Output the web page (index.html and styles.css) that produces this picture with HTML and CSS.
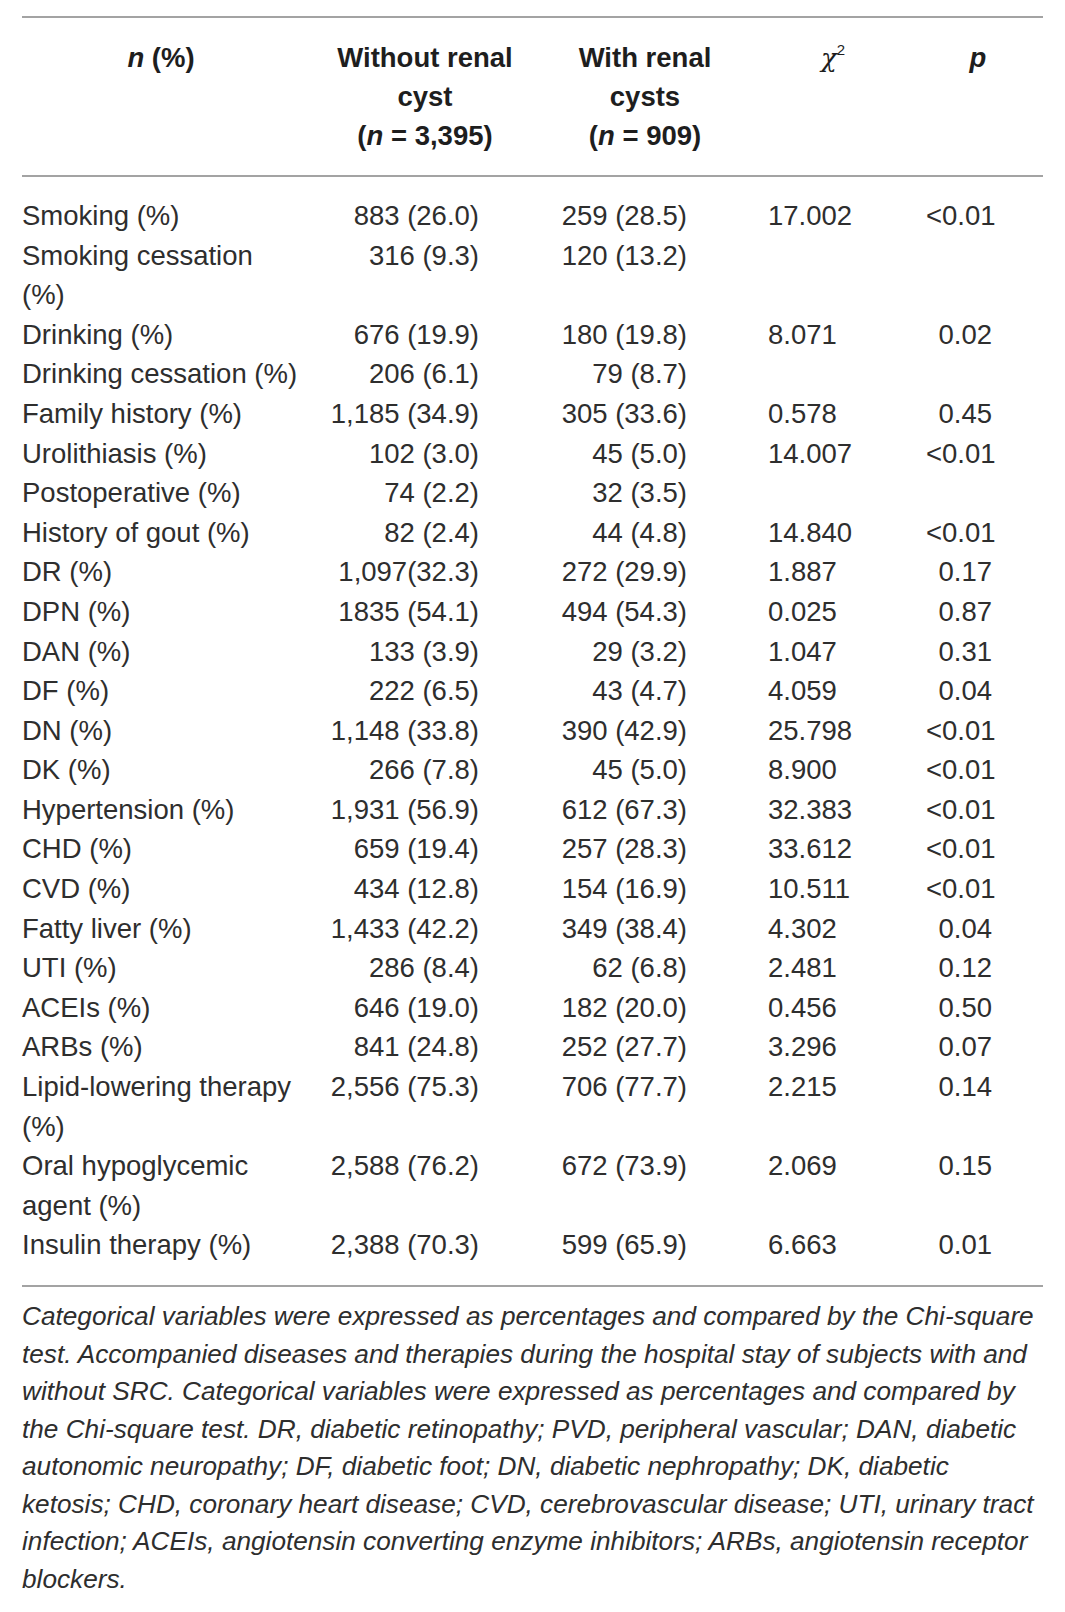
FILE: index.html
```html
<!DOCTYPE html>
<html>
<head>
<meta charset="utf-8">
<link rel="stylesheet" href="styles.css">
</head>
<body>
<div class="wrap">
  <div class="table">
    <div class="row head">
      <div class="c1 hc"><i>n</i> (%)</div>
      <div class="c2 hc">Without renal cyst<br>(<i>n</i> = 3,395)</div>
      <div class="c3 hc">With renal<br>cysts<br>(<i>n</i> = 909)</div>
      <div class="c4 hc chi"><i>χ</i><sup>2</sup></div>
      <div class="c5 hc"><i>p</i></div>
    </div>
    <div class="body">
      <div class="row"><div class="c1">Smoking (%)</div><div class="c2">883 (26.0)</div><div class="c3">259 (28.5)</div><div class="c4">17.002</div><div class="c5">&lt;0.01</div></div>
      <div class="row"><div class="c1">Smoking cessation (%)</div><div class="c2">316 (9.3)</div><div class="c3">120 (13.2)</div><div class="c4"></div><div class="c5"></div></div>
      <div class="row"><div class="c1">Drinking (%)</div><div class="c2">676 (19.9)</div><div class="c3">180 (19.8)</div><div class="c4">8.071</div><div class="c5">0.02</div></div>
      <div class="row"><div class="c1">Drinking cessation (%)</div><div class="c2">206 (6.1)</div><div class="c3">79 (8.7)</div><div class="c4"></div><div class="c5"></div></div>
      <div class="row"><div class="c1">Family history (%)</div><div class="c2">1,185 (34.9)</div><div class="c3">305 (33.6)</div><div class="c4">0.578</div><div class="c5">0.45</div></div>
      <div class="row"><div class="c1">Urolithiasis (%)</div><div class="c2">102 (3.0)</div><div class="c3">45 (5.0)</div><div class="c4">14.007</div><div class="c5">&lt;0.01</div></div>
      <div class="row"><div class="c1">Postoperative (%)</div><div class="c2">74 (2.2)</div><div class="c3">32 (3.5)</div><div class="c4"></div><div class="c5"></div></div>
      <div class="row"><div class="c1">History of gout (%)</div><div class="c2">82 (2.4)</div><div class="c3">44 (4.8)</div><div class="c4">14.840</div><div class="c5">&lt;0.01</div></div>
      <div class="row"><div class="c1">DR (%)</div><div class="c2">1,097(32.3)</div><div class="c3">272 (29.9)</div><div class="c4">1.887</div><div class="c5">0.17</div></div>
      <div class="row"><div class="c1">DPN (%)</div><div class="c2">1835 (54.1)</div><div class="c3">494 (54.3)</div><div class="c4">0.025</div><div class="c5">0.87</div></div>
      <div class="row"><div class="c1">DAN (%)</div><div class="c2">133 (3.9)</div><div class="c3">29 (3.2)</div><div class="c4">1.047</div><div class="c5">0.31</div></div>
      <div class="row"><div class="c1">DF (%)</div><div class="c2">222 (6.5)</div><div class="c3">43 (4.7)</div><div class="c4">4.059</div><div class="c5">0.04</div></div>
      <div class="row"><div class="c1">DN (%)</div><div class="c2">1,148 (33.8)</div><div class="c3">390 (42.9)</div><div class="c4">25.798</div><div class="c5">&lt;0.01</div></div>
      <div class="row"><div class="c1">DK (%)</div><div class="c2">266 (7.8)</div><div class="c3">45 (5.0)</div><div class="c4">8.900</div><div class="c5">&lt;0.01</div></div>
      <div class="row"><div class="c1">Hypertension (%)</div><div class="c2">1,931 (56.9)</div><div class="c3">612 (67.3)</div><div class="c4">32.383</div><div class="c5">&lt;0.01</div></div>
      <div class="row"><div class="c1">CHD (%)</div><div class="c2">659 (19.4)</div><div class="c3">257 (28.3)</div><div class="c4">33.612</div><div class="c5">&lt;0.01</div></div>
      <div class="row"><div class="c1">CVD (%)</div><div class="c2">434 (12.8)</div><div class="c3">154 (16.9)</div><div class="c4">10.511</div><div class="c5">&lt;0.01</div></div>
      <div class="row"><div class="c1">Fatty liver (%)</div><div class="c2">1,433 (42.2)</div><div class="c3">349 (38.4)</div><div class="c4">4.302</div><div class="c5">0.04</div></div>
      <div class="row"><div class="c1">UTI (%)</div><div class="c2">286 (8.4)</div><div class="c3">62 (6.8)</div><div class="c4">2.481</div><div class="c5">0.12</div></div>
      <div class="row"><div class="c1">ACEIs (%)</div><div class="c2">646 (19.0)</div><div class="c3">182 (20.0)</div><div class="c4">0.456</div><div class="c5">0.50</div></div>
      <div class="row"><div class="c1">ARBs (%)</div><div class="c2">841 (24.8)</div><div class="c3">252 (27.7)</div><div class="c4">3.296</div><div class="c5">0.07</div></div>
      <div class="row"><div class="c1">Lipid-lowering therapy (%)</div><div class="c2">2,556 (75.3)</div><div class="c3">706 (77.7)</div><div class="c4">2.215</div><div class="c5">0.14</div></div>
      <div class="row"><div class="c1">Oral hypoglycemic agent (%)</div><div class="c2">2,588 (76.2)</div><div class="c3">672 (73.9)</div><div class="c4">2.069</div><div class="c5">0.15</div></div>
      <div class="row"><div class="c1">Insulin therapy (%)</div><div class="c2">2,388 (70.3)</div><div class="c3">599 (65.9)</div><div class="c4">6.663</div><div class="c5">0.01</div></div>
    </div>
  </div>
  <p class="note">Categorical variables were expressed as percentages and compared by the Chi-square test. Accompanied diseases and therapies during the hospital stay of subjects with and without SRC. Categorical variables were expressed as percentages and compared by the Chi-square test. DR, diabetic retinopathy; PVD, peripheral vascular; DAN, diabetic autonomic neuropathy; DF, diabetic foot; DN, diabetic nephropathy; DK, diabetic ketosis; CHD, coronary heart disease; CVD, cerebrovascular disease; UTI, urinary tract infection; ACEIs, angiotensin converting enzyme inhibitors; ARBs, angiotensin receptor blockers.</p>
</div>
</body>
</html>
```

FILE: styles.css
```css
html, body {
  margin: 0;
  padding: 0;
  background: #ffffff;
}

.wrap {
  width: 1021px;
  margin-left: 22px;
  padding-top: 16px;
  font-family: "Liberation Sans", Arial, sans-serif;
  color: #2e2e2e;
}

.table {
  border-top: 2px solid #a3a3a3;
  border-bottom: 2px solid #a3a3a3;
}

.row {
  display: grid;
  grid-template-columns: 278px 250px 190px 186px 104px;
  align-items: start;
  font-size: 27.5px;
  line-height: 39.6px;
}

.head {
  padding: 21px 0 19.6px;
  line-height: 38.8px;
  border-bottom: 2px solid #a3a3a3;
  font-weight: bold;
  color: #1e1e1e;
}

.hc {
  text-align: center;
}

.head .c2 {
  padding: 0 18px;
}

.chi i {
  font-weight: normal;
  font-family: "DejaVu Serif", "Liberation Serif", serif;
  font-size: 26px;
}

.chi sup {
  font-size: 15px;
  font-weight: normal;
  line-height: 0;
  vertical-align: 12px;
}

.body {
  padding: 19px 0 20px;
}

.body .c2 {
  text-align: right;
  padding-right: 71px;
}

.body .c3 {
  text-align: right;
  padding-right: 53px;
}

.body .c4 {
  text-align: left;
  padding-left: 28px;
}

.body .c5 {
  text-align: right;
  padding-right: 38px;
}

.note {
  margin: 0;
  padding-top: 11px;
  font-style: italic;
  font-size: 26.2px;
  line-height: 37.5px;
  color: #2e2e2e;
}
```
